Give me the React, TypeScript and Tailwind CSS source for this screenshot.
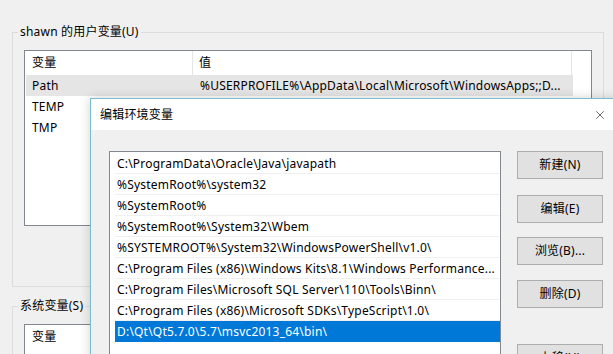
import { X } from "lucide-react";

const pathEntries = [
  "C:\\ProgramData\\Oracle\\Java\\javapath",
  "%SystemRoot%\\system32",
  "%SystemRoot%",
  "%SystemRoot%\\System32\\Wbem",
  "%SYSTEMROOT%\\System32\\WindowsPowerShell\\v1.0\\",
  "C:\\Program Files (x86)\\Windows Kits\\8.1\\Windows Performance...",
  "C:\\Program Files\\Microsoft SQL Server\\110\\Tools\\Binn\\",
  "C:\\Program Files (x86)\\Microsoft SDKs\\TypeScript\\1.0\\",
  "D:\\Qt\\Qt5.7.0\\5.7\\msvc2013_64\\bin\\",
];

const userVars = [
  { name: "Path", value: "%USERPROFILE%\\AppData\\Local\\Microsoft\\WindowsApps;;D...", selected: true },
  { name: "TEMP", value: "%USERPROFILE%\\AppData\\Local\\Temp", selected: false },
  { name: "TMP", value: "%USERPROFILE%\\AppData\\Local\\Temp", selected: false },
];

function Button({ label, className = "" }: { label: string; className?: string }) {
  return (
    <div
      className={`h-[28px] w-[86px] border border-[#adadad] bg-[#e1e1e1] flex items-center justify-center text-[12px] text-black ${className}`}
    >
      {label}
    </div>
  );
}

function EditDialog() {
  return (
    <div className="absolute left-[90px] top-[98px] w-[536px] h-[300px] border border-[#7dbccd] bg-[#f0f0f0] shadow-[0_0_10px_rgba(0,0,0,0.18)]">
      <div className="h-[31px] bg-white flex items-center justify-between">
        <span className="pl-[9px] pt-px text-[12px] text-black">编辑环境变量</span>
        <div className="w-[50px] h-full flex items-center justify-center">
          <X size={14} strokeWidth={1} className="text-black" />
        </div>
      </div>
      <div className="flex pl-[18px] pt-[21px]">
        <div className="w-[392px] h-[220px] border border-[#828790] bg-white pt-px">
          {pathEntries.map((entry, i) => {
            const selected = i === pathEntries.length - 1;
            return (
              <div
                key={i}
                className={`ml-[5px] h-[21px] pl-[2px] pt-px flex items-center whitespace-nowrap text-[12px] ${
                  selected ? "bg-[#0078d7] text-white" : "text-black border-b border-[#f0f0f0]"
                }`}
              >
                {entry}
              </div>
            );
          })}
        </div>
        <div className="ml-[16px] flex flex-col">
          <Button label="新建(N)" />
          <Button label="编辑(E)" className="mt-[16px]" />
          <Button label="浏览(B)..." className="mt-[14px]" />
          <Button label="删除(D)" className="mt-[15px]" />
          <Button label="上移(U)" className="mt-[36px]" />
        </div>
      </div>
    </div>
  );
}

export default function App() {
  return (
    <div className="relative w-[613px] h-[354px] overflow-hidden bg-[#f0f0f0] px-[12px] pt-[24px] font-['Segoe_UI','Noto_Sans','Noto_Sans_CJK_SC',sans-serif] tracking-[0.2px] text-black">
      <fieldset className="w-[592px] border border-[#dcdcdc] pt-[10px] pb-[60px]">
        <legend className="ml-[5px] px-[2px] text-[12px] leading-[16px]">shawn 的用户变量(U)</legend>
        <div className="mx-[11px] w-[568px] h-[176px] border border-[#828790] bg-white text-[12px]">
          <div className="flex h-[24px] items-center">
            <div className="w-[168px] pl-[7px] h-full flex items-center border-r border-[#e5e5e5]">变量</div>
            <div className="w-[379px] pl-[6px] h-full flex items-center border-r border-[#e5e5e5]">值</div>
          </div>
          {userVars.map((v) => (
            <div
              key={v.name}
              className={`flex h-[21px] items-center w-[547px] ml-[1px] whitespace-nowrap ${v.selected ? "bg-[#e5e5e5]" : ""}`}
            >
              <div className="w-[168px] pl-[6px]">{v.name}</div>
              <div className="pl-[6px]">{v.value}</div>
            </div>
          ))}
        </div>
      </fieldset>

      <fieldset className="mt-[11px] w-[592px] h-[80px] border border-[#dcdcdc] pt-[10px]">
        <legend className="ml-[5px] px-[2px] text-[12px] leading-[16px]">系统变量(S)</legend>
        <div className="mx-[11px] w-[568px] h-[120px] border border-[#828790] bg-white text-[12px]">
          <div className="flex h-[24px] items-center">
            <div className="w-[168px] pl-[7px] h-full flex items-center border-r border-[#e5e5e5]">变量</div>
          </div>
        </div>
      </fieldset>

      <EditDialog />
    </div>
  );
}
